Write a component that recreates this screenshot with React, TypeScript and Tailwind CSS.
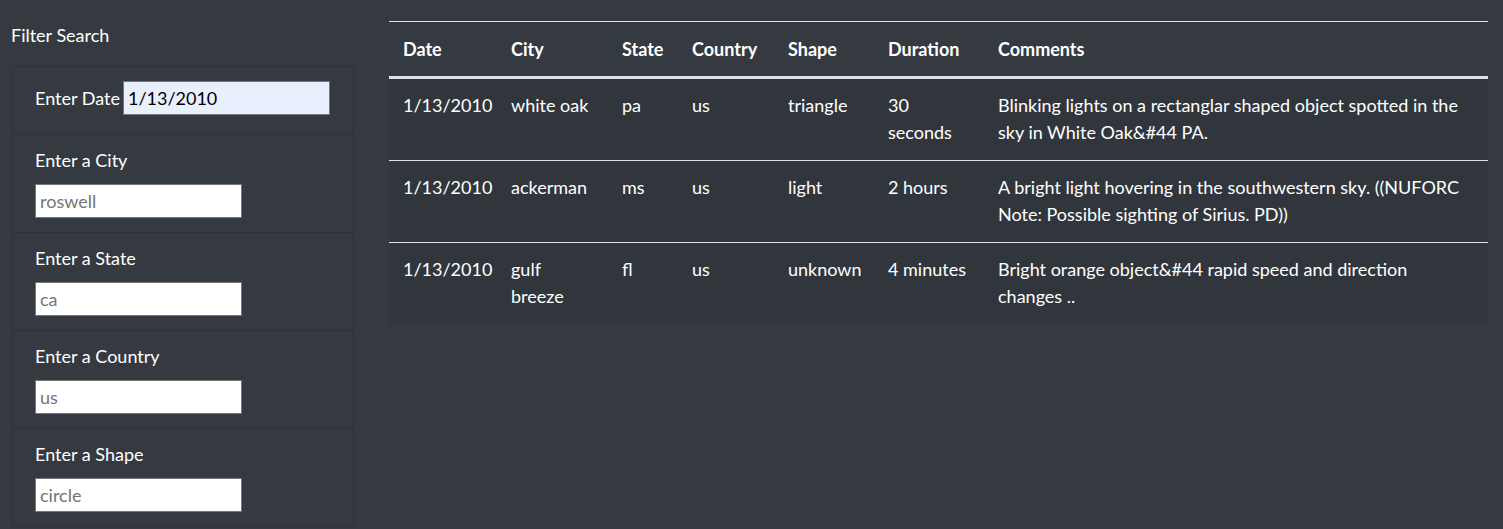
import React from "react";

const rows = [
  {
    date: "1/13/2010",
    city: "white oak",
    state: "pa",
    country: "us",
    shape: "triangle",
    duration: "30 seconds",
    comments: "Blinking lights on a rectanglar shaped object spotted in the sky in White Oak&#44 PA.",
  },
  {
    date: "1/13/2010",
    city: "ackerman",
    state: "ms",
    country: "us",
    shape: "light",
    duration: "2 hours",
    comments: "A bright light hovering in the southwestern sky. ((NUFORC Note: Possible sighting of Sirius. PD))",
  },
  {
    date: "1/13/2010",
    city: "gulf breeze",
    state: "fl",
    country: "us",
    shape: "unknown",
    duration: "4 minutes",
    comments: "Bright orange object&#44 rapid speed and direction changes ..",
  },
];

const fields = [
  { label: "Enter a City", ph: "roswell" },
  { label: "Enter a State", ph: "ca" },
  { label: "Enter a Country", ph: "us" },
  { label: "Enter a Shape", ph: "circle" },
];

export default function App() {
  return (
    <div
      className="min-h-[529px] w-full bg-[#353a41] text-white text-[18px] leading-[27px] flex"
      style={{ fontFamily: "Lato, 'Open Sans', sans-serif" }}
    >
      <div className="w-[342px] ml-[12px] pt-[22px] shrink-0">
        <div className="-ml-[1px] mb-[17px]">Filter Search</div>
        <div className="border border-[#2c3137] rounded-[4px]">
          <div className="flex items-center pl-[22px] pt-[14px] pb-[19px] border-b border-[#2c3137]">
            <label className="mr-[3px]">Enter Date</label>
            <input
              className="w-[207px] h-[34px] border border-[#767676] bg-[#e8f0fe] text-black px-[4px] outline-none"
              defaultValue="1/13/2010"
            />
          </div>
          {fields.map((f, i) => (
            <div
              key={f.label}
              className={`pl-[22px] pt-[12px] pb-[14px] ${i < fields.length - 1 ? "border-b border-[#2c3137]" : ""}`}
            >
              <div className="mb-[10px]">{f.label}</div>
              <input
                className="block w-[207px] h-[34px] border border-[#767676] bg-white text-black px-[4px] outline-none placeholder:text-[#757575]"
                placeholder={f.ph}
              />
            </div>
          ))}
        </div>
      </div>
      <div className="ml-[35px] mr-[15px] pt-[21px] flex-1">
        <table className="w-full table-fixed border-collapse">
          <colgroup>
            <col className="w-[108px]" />
            <col className="w-[111px]" />
            <col className="w-[70px]" />
            <col className="w-[96px]" />
            <col className="w-[100px]" />
            <col className="w-[110px]" />
            <col />
          </colgroup>
          <thead>
            <tr className="border-t border-[#dee2e6] border-b-[3px] border-b-[#dee2e6]">
              {["Date", "City", "State", "Country", "Shape", "Duration", "Comments"].map((h) => (
                <th key={h} className="text-left font-bold px-[14px] pt-[14px] pb-[13px] align-top">
                  {h}
                </th>
              ))}
            </tr>
          </thead>
          <tbody>
            {rows.map((r, i) => (
              <tr key={i} className={`bg-[#31363d] ${i < rows.length - 1 ? "border-b border-[#dee2e6]" : ""}`}>
                {[r.date, r.city, r.state, r.country, r.shape, r.duration, r.comments].map((c, j) => (
                  <td key={j} className="px-[14px] pt-[13px] pb-[14px] align-top">
                    {c}
                  </td>
                ))}
              </tr>
            ))}
          </tbody>
        </table>
      </div>
    </div>
  );
}
